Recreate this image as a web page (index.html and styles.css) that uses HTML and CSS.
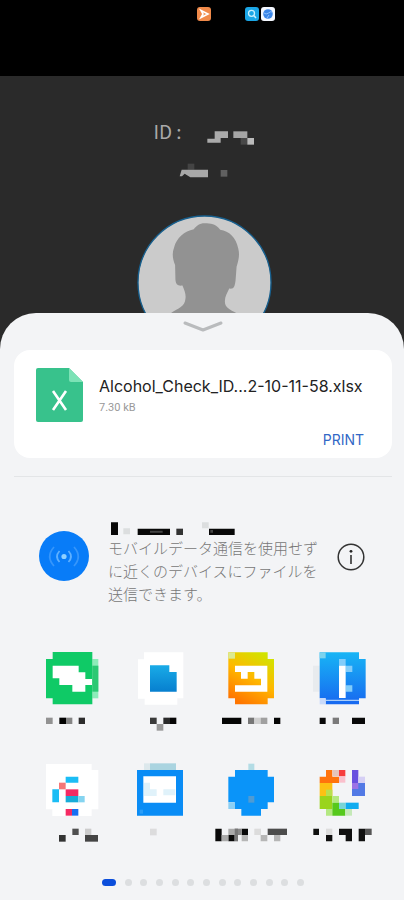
FILE: index.html
```html
<!DOCTYPE html>
<html lang="ja">
<head>
  <meta charset="UTF-8">
  <meta name="viewport" content="width=device-width, initial-scale=1.0">
  <title>Alcohol Check</title>
  <link rel="stylesheet" href="styles.css">
</head>
<body>

  <div class="statusbar">
    <svg class="status-icon" viewBox="0 0 14 14">
      <rect width="14" height="14" rx="3" fill="#f08a4a"/>
      <path d="M4 3.5L11 7L4 10.5L6 7Z" fill="none" stroke="#fff" stroke-width="1.6"/>
    </svg>
    <div class="status-group">
      <svg class="status-icon" viewBox="0 0 14 14">
        <rect width="14" height="14" rx="3" fill="#1ba6e6"/>
        <circle cx="6.5" cy="6.3" r="3" fill="none" stroke="#c8f0ff" stroke-width="1.3"/>
        <path d="M8.8 8.6L11 11" stroke="#c8f0ff" stroke-width="1.5"/>
      </svg>
      <svg class="status-icon" viewBox="0 0 14 14">
        <rect width="14" height="14" rx="3" fill="#f4f8ff"/>
        <circle cx="7" cy="7" r="4.8" fill="#3a86e8"/>
        <path d="M3 6Q5 8 7.500 6T11 5M6 11L8 8" fill="none" stroke="#8cc0ff"/>
      </svg>
    </div>
  </div>

  <header class="profile">
    <div class="profile-id">
      <span>ID :</span>
      <svg width="48" height="16" viewBox="264 58 144 48">
        <path d="M287 62h40v20h-22v14h-40v-12h22z" fill="#aaa"/>
        <path d="M343 62h42v20h-42z" fill="#a5a5a5"/>
        <path d="M365 82h20v20h-20z" fill="#484848"/>
        <path d="M385 82h20v20h-20z" fill="#bbb"/>
      </svg>
    </div>
    <svg class="profile-name" width="50" height="16" viewBox="181 158 150 48">
      <path d="M207 160h20v18h-20z" fill="#444"/>
      <path d="M183 198L189 178H268V201H215L198 190L190 198Z" fill="#a8a8a8"/>
      <path d="M306 179h20v20h-20z" fill="#606060"/>
    </svg>
    <svg class="avatar" viewBox="48 315 404 404">
      <circle cx="250" cy="517" r="199" fill="#cbcbcb" stroke="#17608f" stroke-width="4"/>
      <path fill="#929292" d="M250 340C235 340 225 348 218 358C190 363 166 385 159 412C152 430 155 447 162 465L163 508C164 523 170 528 184 526C190 540 195 552 193 566C191 590 172 594 150 608V690H345V608C326 598 310 592 311 572C311 560 318 548 324 535C338 538 341 527 343 510L346 470C352 450 356 434 351 415C344 382 324 363 297 359C284 342 268 340 250 340Z"/>
    </svg>
  </header>

  <main class="sheet">
    <button class="collapse" type="button" aria-label="閉じる">
      <svg width="40" height="12" viewBox="0 0 40 12">
        <path d="M2 2L20 9L38 2" fill="none" stroke="#b9bbbd" stroke-width="3" stroke-linecap="round" stroke-linejoin="round"/>
      </svg>
    </button>

    <section class="file-card">
      <svg class="file-icon" viewBox="0 0 47 54">
        <path d="M2 0H33L47 14V52Q47 54 45 54H2Q0 54 0 52V2Q0 0 2 0Z" fill="#38c28c"/>
        <path d="M33 0L47 14H35Q33 14 33 12Z" fill="#7ce2b6"/>
        <path d="M17 23L30 42M30 23L17 42" fill="none" stroke="#fff" stroke-width="2.600"/>
      </svg>
      <div class="file-info">
        <h1>Alcohol_Check_ID...2-10-11-58.xlsx</h1>
        <p>7.30 kB</p>
      </div>
      <button class="print" type="button">PRINT</button>
    </section>

    <section class="nearby">
      <svg class="nearby-icon" viewBox="0 0 50 50">
        <circle cx="25" cy="25" r="25" fill="#087cf8"/>
        <circle cx="25" cy="25.500" r="2.600" fill="#8fd0ff"/>
        <path d="M20.500 20Q15.500 25.500 20.500 31M29.500 20Q34.500 25.500 29.500 31" fill="none" stroke="#5eb0ff" stroke-width="1.700"/>
        <path d="M15 16Q6.500 25.500 15 35M35 16Q43.500 25.500 35 35" fill="none" stroke="#3696fb" stroke-width="1.700"/>
      </svg>
      <div class="nearby-text">
        <svg width="204" height="16" viewBox="324 63 612 48">
          <path d="M333 67h21v38h-21zM413 86h97v19h-97zM627 86h77v19h-77z" fill="#080808"/>
          <path d="M450 92h38v6h-38zM631 90h8v8h-8z" fill="#444"/>
          <path d="M529 86h20v19h-20z" fill="#333"/>
          <path d="M370 85h20v18h-20zM606 67h20v18h-20z" fill="#dcdedf"/>
        </svg>
        <p>モバイルデータ通信を使用せずに近くのデバイスにファイルを送信できます。</p>
      </div>
      <button class="info" type="button" aria-label="情報">
        <svg width="28" height="28" viewBox="0 0 28 28">
          <circle cx="14" cy="14" r="12.800" fill="none" stroke="#333" stroke-width="1.500"/>
          <circle cx="14" cy="8.300" r="1.400" fill="#222"/>
          <path d="M14 12V21" stroke="#333" stroke-width="1.600"/>
        </svg>
      </button>
    </section>

    <section class="apps">
      <button class="app" type="button" aria-label="アプリ 1">
        <svg viewBox="-24 30 270 300">
          <path d="M187 57h18v118h-18z" fill="#8cecb9"/>
          <path d="M187 77h18v78h-18z" fill="#2bc873"/>
          <path d="M68 36h119v157h-119v-18h-20v-118h20z" fill="#0fca66"/>
          <path d="M68 77h78v20h20v20h20v18h-20v20h-39v-20h-39v-20h-20z" fill="#fff"/>
          <path d="M48 233h20v19h-20z" fill="#929292"/>
          <path d="M88 233h20v19h-20z" fill="#000"/>
          <path d="M108 233h19v19h-19z" fill="#858585"/>
          <path d="M146 233h19v19h-19z" fill="#2c2c2c"/>
        </svg>
      </button>
      <button class="app" type="button" aria-label="アプリ 2">
        <svg viewBox="-24 30 270 300">
          <defs>
            <linearGradient id="files" x1="0" y1="0" x2="0" y2="1">
              <stop offset="0" stop-color="#19abe7"/>
              <stop offset="1" stop-color="#077fcf"/>
            </linearGradient>
          </defs>
          <path d="M72 37h118v138h-18v19h-98v-18h-20v-118h18z" fill="#fff"/>
          <path d="M90 76h58v20h22v59h-80z" fill="url(#files)"/>
          <path d="M90 233h20v19h-20z" fill="#3a3a3a"/>
          <path d="M110 252h20v20h-20z" fill="#999"/>
          <path d="M130 233h20v19h-20z" fill="#2a2a2a"/>
          <path d="M150 233h19v19h-19z" fill="#050505"/>
        </svg>
      </button>
      <button class="app" type="button" aria-label="アプリ 3">
        <svg viewBox="-24 30 270 300">
          <defs>
            <linearGradient id="sunny" x1="0.800" y1="0" x2="0.300" y2="1">
              <stop offset="0" stop-color="#cfe600"/>
              <stop offset="0.500" stop-color="#ffb800"/>
              <stop offset="1" stop-color="#ff7500"/>
            </linearGradient>
          </defs>
          <path d="M55 37h118v20h19v118h-19v18h-98v-18h-20z" fill="url(#sunny)"/>
          <path d="M55 37h20v19h-20z" fill="#dcea90"/>
          <path d="M75 77h97v78h-97v-19h78v-20h-20v-20h-20v20h-20v-20h-18z" fill="#fff"/>
          <path d="M36 233h58v19h-58zM192 233h19v19h-19z" fill="#050505"/>
          <path d="M114 233h19v19h-19z" fill="#777"/>
          <path d="M133 233h19v19h-19z" fill="#d0d0d0"/>
          <path d="M152 233h20v19h-20z" fill="#a0a0a0"/>
        </svg>
      </button>
      <button class="app" type="button" aria-label="アプリ 4">
        <svg viewBox="246 30 270 300">
          <defs>
            <linearGradient id="sky" x1="0" y1="0" x2="0" y2="1">
              <stop offset="0" stop-color="#18b5f5"/>
              <stop offset="1" stop-color="#1768f0"/>
            </linearGradient>
          </defs>
          <path d="M309 77h20v78h-20z" fill="#e8ebee"/>
          <path d="M329 37h118v20h20v118h-20v18h-100v-18h-18z" fill="url(#sky)"/>
          <path d="M329 37h18v18h-18z" fill="#7bd3ee"/>
          <path d="M347 179h100v4h-100z" fill="#a9cdfa"/>
          <path d="M329 175h18v18h-18z" fill="#c9dafa"/>
          <path d="M387 57h20v20h-20zM407 77h20v19h-20zM407 136h20v19h-20z" fill="#82cdfa"/>
          <path d="M387 77h20v97h-20z" fill="#fff"/>
          <path d="M329 233h18v19h-18zM426 233h39v19h-39z" fill="#080808"/>
          <path d="M368 233h19v19h-19z" fill="#7a7a7a"/>
        </svg>
      </button>
      <button class="app" type="button" aria-label="アプリ 5">
        <svg viewBox="-24 30 270 300">
          <path d="M48 42h137v18h20v118h-20v20h-118v-20h-19z" fill="#fff"/>
          <path d="M107 80h38v18h-38zM67 118h20v39h-20z" fill="#1bbdf5"/>
          <path d="M87 98h20v20h-20z" fill="#f47777"/>
          <path d="M107 118h38v20h-38z" fill="#f52a62"/>
          <path d="M107 138h38v19h-38z" fill="#18acd8"/>
          <path d="M145 138h19v19h-19z" fill="#85d4f0"/>
          <path d="M107 177h19v20h-19z" fill="#f52a62"/>
          <path d="M126 177h19v20h-19z" fill="#176ff2"/>
          <path d="M87 255h20v20h-20z" fill="#333"/>
          <path d="M127 236h19v19h-19z" fill="#505050"/>
          <path d="M165 236h19v19h-19z" fill="#ccc"/>
          <path d="M165 255h39v20h-39z" fill="#444"/>
        </svg>
      </button>
      <button class="app" type="button" aria-label="アプリ 6">
        <svg viewBox="246 30 270 300">
          <path d="M342 40h18v20h-18z" fill="#dce8ec"/>
          <path d="M360 40h78v20h-78z" fill="#aad4e0"/>
          <path d="M321 60h138v137h-138z" fill="#098cf5"/>
          <path d="M340 79h98v79h-98z" fill="#fff"/>
          <path d="M342 98h18v20h20v20h-38zM400 118h36v18h-36z" fill="#e0f2fa"/>
          <path d="M329 179h10v12h-10z" fill="#2a9df7"/>
          <path d="M360 236h20v20h-20z" fill="#dcdcdd"/>
        </svg>
      </button>
      <button class="app" type="button" aria-label="アプリ 7">
        <svg viewBox="6 30 270 300">
          <path d="M145 41h18v19h-18z" fill="#b3dce5"/>
          <path d="M105 60h98v20h19v77h-19v20h-20v20h-59v-20h-20v-20h-19v-77h20z" fill="#0a94f9"/>
          <path d="M85 157h20v20h-20z" fill="#8bcff4"/>
          <path d="M145 138h18v20h-18z" fill="#4f9bd3"/>
          <path d="M46 236h19v38h-19zM85 255h19v19h-19zM125 236h19v19h-19z" fill="#090909"/>
          <path d="M85 236h19v19h-19zM65 255h20v19h-20z" fill="#aaa"/>
          <path d="M104 236h21v19h-21z" fill="#888"/>
          <path d="M104 236h10v38h-10z" fill="#777"/>
          <path d="M125 255h19v19h-19zM182 255h20v19h-20zM222 255h19v19h-19z" fill="#b6b6b6"/>
          <path d="M163 236h20v19h-20z" fill="#dcdcdc"/>
          <path d="M203 236h58v19h-58z" fill="#4c4c4c"/>
        </svg>
      </button>
      <button class="app" type="button" aria-label="アプリ 8">
        <svg viewBox="276 30 270 300">
          <path d="M378 60h19v20h20v19h-58v-19h19z" fill="#ff730d"/>
          <path d="M398 60h19v19h-19z" fill="#e5c4bc"/>
          <path d="M417 60h19v19h-19z" fill="#f63d3d"/>
          <path d="M417 79h19v19h-19z" fill="#fac0cc"/>
          <path d="M456 60h19v39h-19z" fill="#6850df"/>
          <path d="M475 80h20v19h-20z" fill="#d5cff5"/>
          <path d="M456 99h39v39h-39z" fill="#5279e5"/>
          <path d="M456 99h19v18h-19z" fill="#9c72e5"/>
          <path d="M359 99h38v39h-38z" fill="#fcc114"/>
          <path d="M378 119h19v19h-19z" fill="#b8df50"/>
          <path d="M359 138h38v39h-38z" fill="#9ad41c"/>
          <path d="M397 138h20v20h-20zM378 177h19v20h-19z" fill="#b4e882"/>
          <path d="M397 158h20v19h19v20h-39z" fill="#56c91c"/>
          <path d="M436 177h20v20h-20z" fill="#c5e9b8"/>
          <path d="M417 158h20v19h-20z" fill="#78d5d6"/>
          <path d="M437 158h39v19h-39z" fill="#10acf0"/>
          <path d="M340 236h17v19h-17zM378 255h19v19h-19zM417 236h39v19h-39zM437 255h19v19h-19zM476 236h19v38h-19z" fill="#101010"/>
          <path d="M378 236h19v19h-19z" fill="#ddd"/>
          <path d="M495 236h20v19h-20z" fill="#555"/>
        </svg>
      </button>
    </section>

    <div class="pager">
      <span class="dot active"></span>
      <span class="dot"></span>
      <span class="dot"></span>
      <span class="dot"></span>
      <span class="dot"></span>
      <span class="dot"></span>
      <span class="dot"></span>
      <span class="dot"></span>
      <span class="dot"></span>
      <span class="dot"></span>
      <span class="dot"></span>
      <span class="dot"></span>
      <span class="dot"></span>
    </div>
  </main>

</body>
</html>
```

FILE: styles.css
```css
* {
  box-sizing: border-box;
}

body {
  margin: 0;
  min-height: 100vh;
  display: flex;
  flex-direction: column;
  background: #2a2a2a;
  font-family: "Noto Sans", "Noto Sans CJK JP", sans-serif;
}

h1, p {
  margin: 0;
}

svg {
  display: block;
}

button {
  border: none;
  padding: 0;
  background: none;
  font-family: inherit;
  cursor: pointer;
}

/* status bar */
.statusbar {
  height: 76px;
  padding: 7px 0 0 68px;
  display: flex;
  justify-content: center;
  gap: 34px;
  background: #000;
}

.status-group {
  display: flex;
  gap: 2px;
}

.status-icon {
  width: 14px;
  height: 14px;
}

/* profile behind the sheet */
.profile {
  display: flex;
  flex-direction: column;
  align-items: center;
  padding: 42px 0 0 4px;
}

.profile-id {
  display: flex;
  align-items: flex-end;
  gap: 25px;
  height: 28px;
  color: #a9a9a9;
  font-family: "Noto Sans CJK JP", sans-serif;
  font-size: 19px;
  line-height: 30px;
}

.profile-name {
  margin-top: 17px;
}

.avatar {
  width: 135px;
  height: 135px;
  margin-top: 36px;
}

/* share sheet */
.sheet {
  position: relative;
  flex: 1;
  margin-top: -37px;
  padding: 8px 12px 0 14px;
  border-radius: 36px 36px 0 0;
  background: #f3f4f6;
}

.collapse {
  display: block;
  margin: 0 auto;
}

.file-card {
  display: grid;
  grid-template-columns: 47px 1fr;
  column-gap: 16px;
  margin-top: 17px;
  padding: 18px 20px 4px 22px;
  border-radius: 16px;
  background: #fff;
}

.file-icon {
  width: 47px;
  height: 54px;
}

.file-info {
  padding-top: 7px;
}

.file-info h1 {
  color: #222;
  font-family: Inter, sans-serif;
  font-size: 16px;
  font-weight: 400;
  line-height: 22px;
  white-space: nowrap;
}

.file-info p {
  color: #999;
  font-family: Roboto, sans-serif;
  font-size: 11px;
  line-height: 22px;
}

.print {
  grid-column: 2;
  justify-self: end;
  padding: 8px 8px 4px;
  color: #3268c6;
  font-family: Inter, sans-serif;
  font-size: 14px;
  line-height: 20px;
}

.nearby {
  display: grid;
  grid-template-columns: 50px 1fr 28px;
  align-items: start;
  column-gap: 19px;
  margin-top: 18px;
  padding: 44px 27px 0 25px;
  border-top: 1px solid #e3e5e7;
}

.nearby-icon {
  width: 50px;
  height: 50px;
  margin-top: 10px;
}

.nearby-text p {
  color: #777;
  font-size: 15px;
  font-weight: 300;
  line-height: 23px;
}

.info {
  margin-top: 22px;
}

.apps {
  display: grid;
  grid-template-columns: repeat(4, 1fr);
  row-gap: 10px;
  margin-top: 44px;
  padding: 0 10px 0 8px;
}

.app svg {
  width: 100%;
}

.pager {
  display: flex;
  justify-content: space-between;
  align-items: center;
  width: 202px;
  margin: 19px auto 14px;
}

.dot {
  width: 7px;
  height: 7px;
  border-radius: 50%;
  background: #dcdee0;
}

.dot.active {
  width: 14px;
  border-radius: 4px;
  background: #0b4edb;
}
```
